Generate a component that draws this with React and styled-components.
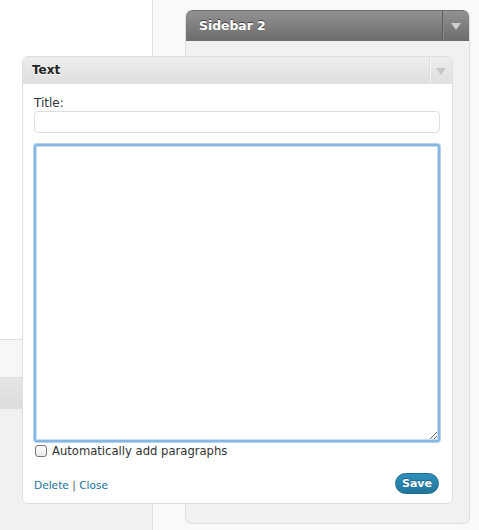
import React from "react";
import styled, { createGlobalStyle } from "styled-components";

const Global = createGlobalStyle`
  html, body { margin: 0; padding: 0; background: #fff; }
  body { font-family: "DejaVu Sans", "Liberation Sans", sans-serif; }
  * { box-sizing: border-box; }
`;

const Page = styled.div`
  position: relative;
  width: 479px;
  height: 530px;
  overflow: hidden;
  display: flex;
  background: #f9f9f9;
`;

const LeftCol = styled.div`
  width: 153px;
  flex: none;
  display: flex;
  flex-direction: column;
  border-right: 1px solid #dfdfdf;
  background: #f1f1f1;
`;

const LeftTop = styled.div`
  height: 340px;
  background: #fff;
  border-bottom: 1px solid #dfdfdf;
`;

const LeftPanel = styled.div`
  height: 38px;
  background: #f7f7f7;
  border-bottom: 1px solid #dfdfdf;
`;

const LeftBar = styled.div`
  height: 31px;
  background: linear-gradient(#e6e6e6, #dcdcdc);
  border-bottom: 1px solid #dfdfdf;
`;

const MidCol = styled.div`
  width: 32px;
  flex: none;
  background: #f9f9f9;
`;

const SidebarCol = styled.div`
  width: 285px;
  flex: none;
  padding-top: 10px;
`;

const Sidebar = styled.div`
  height: 514px;
  border: 1px solid #dfdfdf;
  border-top: none;
  border-radius: 7px;
  background: #f1f1f1;
  display: flex;
  flex-direction: column;
  overflow: hidden;
`;

const SidebarHead = styled.div`
  height: 31px;
  flex: none;
  display: flex;
  align-items: stretch;
  background: linear-gradient(#929292, #6d6d6d);
  border: 1px solid #6d6d6d;
  border-radius: 7px 7px 0 0;
  margin: 0 -1px;
`;

const SidebarTitle = styled.div`
  flex: 1;
  padding-left: 13px;
  display: flex;
  align-items: center;
  color: #fff;
  font-weight: bold;
  font-size: 12.4px;
  text-shadow: 0 -1px 0 #3f3f3f;
`;

const Toggle = styled.div`
  width: ${(p) => p.$w}px;
  flex: none;
  display: flex;
  align-items: center;
  justify-content: center;
  border-left: 1px solid ${(p) => p.$line};
  box-shadow: inset 1px 0 0 ${(p) => p.$hi};
`;

const Arrow = styled.span`
  width: 0;
  height: 0;
  border-left: 5px solid transparent;
  border-right: 5px solid transparent;
  border-top: 7px solid ${(p) => p.$c};
  margin-top: 2px;
`;

const RightCol = styled.div`
  flex: 1;
  background: #f9f9f9;
`;

const Widget = styled.div`
  position: absolute;
  left: 22px;
  top: 56px;
  width: 431px;
  height: 448px;
  background: #fff;
  border: 1px solid #dfdfdf;
  border-radius: 6px;
  display: flex;
  flex-direction: column;
  overflow: hidden;
`;

const WidgetHead = styled.div`
  height: 27px;
  flex: none;
  display: flex;
  background: linear-gradient(#ededed, #dfdfdf);
  border-bottom: 1px solid #dfdfdf;
`;

const WidgetTitle = styled.div`
  flex: 1;
  padding-left: 9px;
  display: flex;
  align-items: center;
  font-weight: bold;
  font-size: 12px;
  color: #222;
  text-shadow: 0 1px 0 #fff;
`;

const WidgetBody = styled.div`
  flex: 1;
  padding: 11px 12px 0 11px;
  display: flex;
  flex-direction: column;
`;

const Label = styled.label`
  font-size: 12px;
  color: #333;
  height: 16px;
  line-height: 16px;
`;

const Input = styled.input`
  height: 22px;
  width: 100%;
  border: 1px solid #dfdfdf;
  border-radius: 4px;
  background: #fff;
  outline: none;
  font-size: 12px;
`;

const TextArea = styled.textarea`
  margin-top: 11px;
  height: 298px;
  width: 100%;
  border: 2px solid #86b7e2;
  border-radius: 3px;
  box-shadow: 0 0 0 1px #b3d3f0, inset 0 0 0 1px #c4def4;
  outline: none;
  resize: both;
  font-size: 12px;
`;

const CheckRow = styled.label`
  display: flex;
  align-items: center;
  gap: 5px;
  margin-top: 2px;
  font-size: 11.6px;
  color: #333;
  height: 14px;
`;

const Check = styled.span`
  width: 12px;
  height: 12px;
  border: 1px solid #777;
  border-radius: 3px;
  background: linear-gradient(#fff, #e8e8e8);
  margin-left: 1px;
`;

const Actions = styled.div`
  margin-top: 15px;
  display: flex;
  align-items: center;
  justify-content: space-between;
  padding-right: 1px;
`;

const Links = styled.div`
  font-size: 10.6px;
  color: #555;
  padding-top: 3px;
`;

const Link = styled.a`
  color: #21759b;
  text-decoration: none;
`;

const SaveButton = styled.button`
  width: 44px;
  height: 21px;
  border: 1px solid #1e6a8d;
  border-radius: 11px;
  background: linear-gradient(#2e8fbd, #21759b);
  color: #fff;
  font-family: "DejaVu Sans", sans-serif;
  font-weight: bold;
  font-size: 11px;
  padding: 0;
  text-shadow: 0 -1px 0 rgba(0, 0, 0, 0.3);
`;

export default function App() {
  return (
    <>
      <Global />
      <Page>
        <LeftCol>
          <LeftTop />
          <LeftPanel />
          <LeftBar />
        </LeftCol>
        <MidCol />
        <SidebarCol>
          <Sidebar>
            <SidebarHead>
              <SidebarTitle>Sidebar 2</SidebarTitle>
              <Toggle $w={27} $line="#5f5f5f" $hi="#8a8a8a">
                <Arrow $c="#d0d0d0" />
              </Toggle>
            </SidebarHead>
          </Sidebar>
        </SidebarCol>
        <RightCol />
        <Widget>
          <WidgetHead>
            <WidgetTitle>Text</WidgetTitle>
            <Toggle $w={23} $line="#dfdfdf" $hi="#f4f4f4">
              <Arrow $c="#c6c6c6" />
            </Toggle>
          </WidgetHead>
          <WidgetBody>
            <Label>Title:</Label>
            <Input />
            <TextArea />
            <CheckRow>
              <Check />
              Automatically add paragraphs
            </CheckRow>
            <Actions>
              <Links>
                <Link href="#">Delete</Link> | <Link href="#">Close</Link>
              </Links>
              <SaveButton>Save</SaveButton>
            </Actions>
          </WidgetBody>
        </Widget>
      </Page>
    </>
  );
}
